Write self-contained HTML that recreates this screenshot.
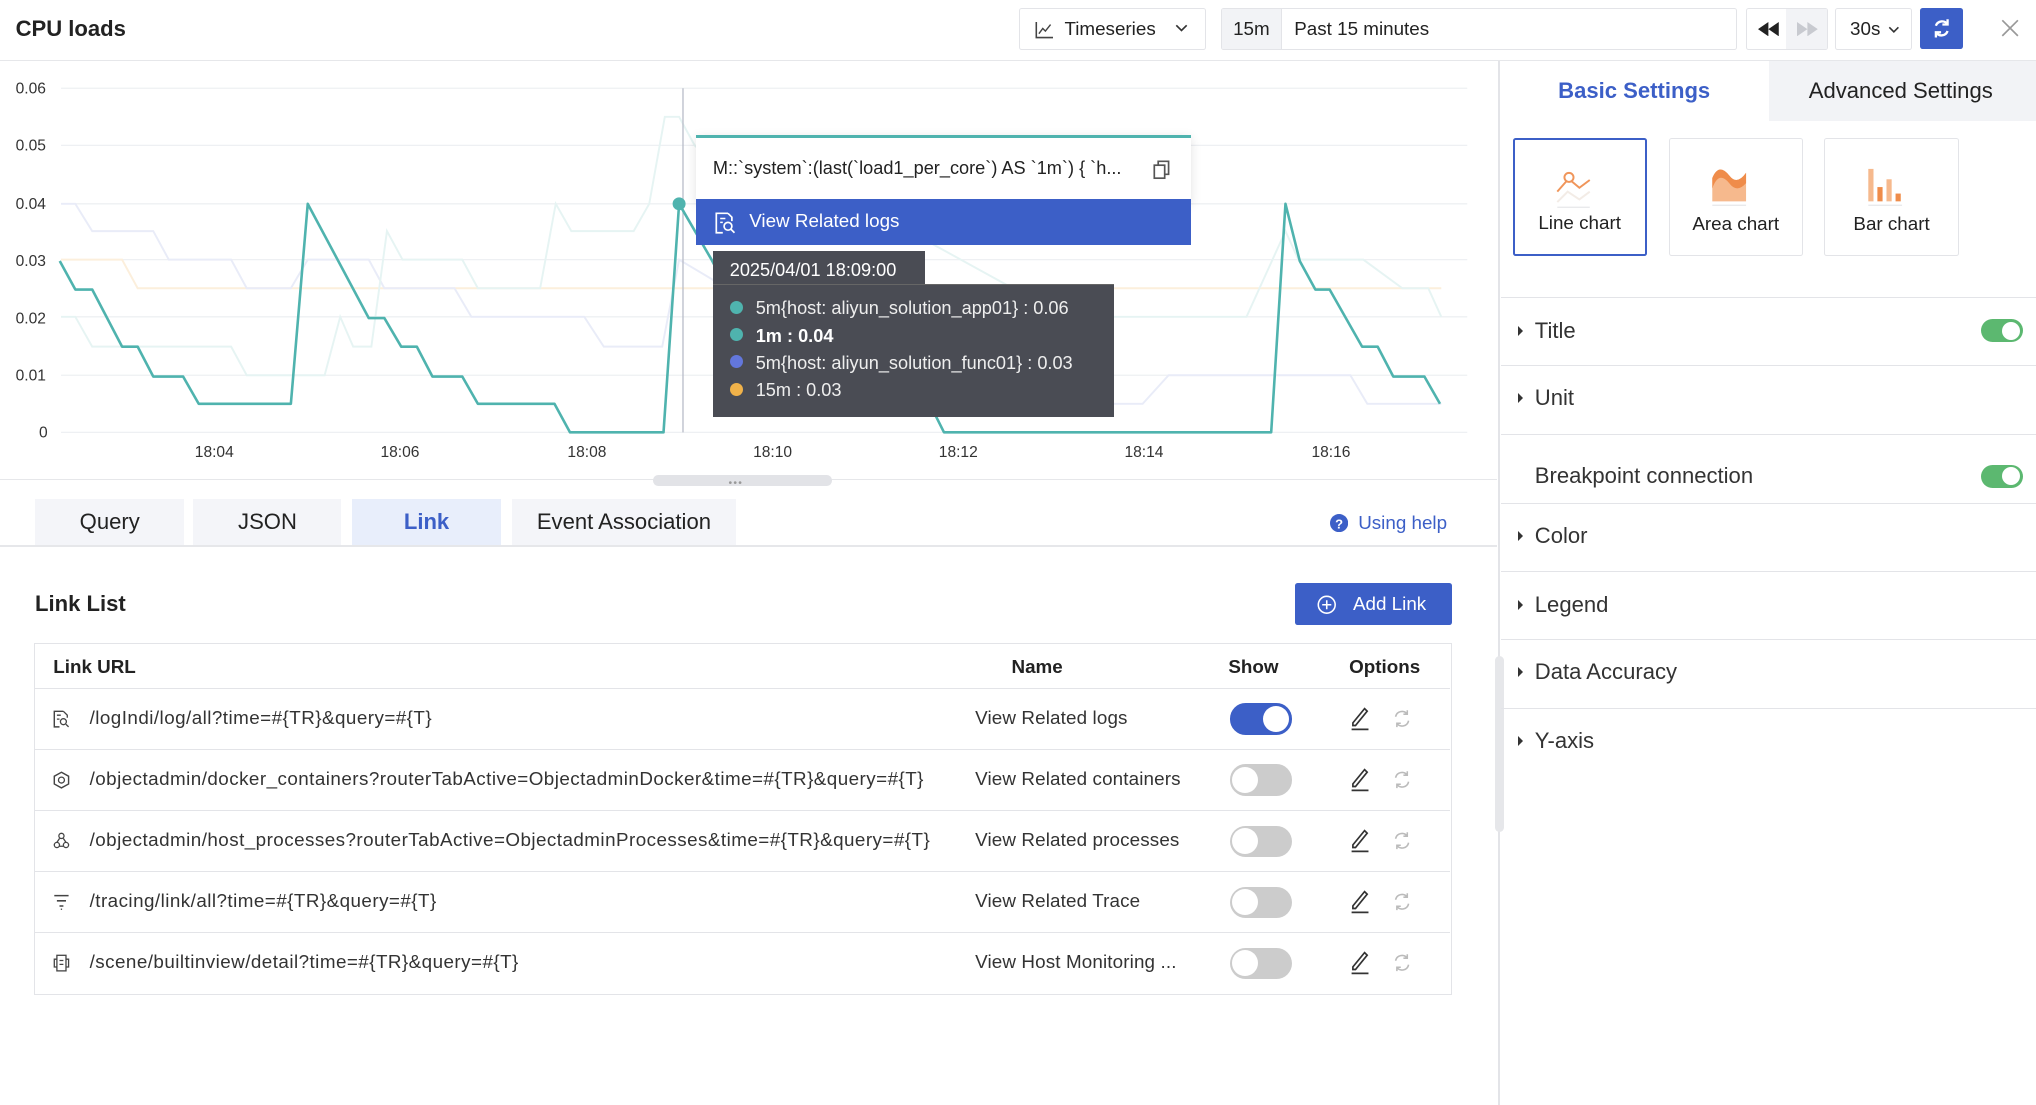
<!DOCTYPE html>
<html><head><meta charset="utf-8">
<style>
html,body{margin:0;padding:0;background:#fff;overflow:hidden}
body{width:2036px;height:1104px}
#w{position:absolute;left:0;top:0;width:1568px;height:851px;zoom:1.29847;font-family:"Liberation Sans",sans-serif;color:#222;font-size:14.5px}
.a{position:absolute}
.box{position:absolute;border:1px solid #e3e4e8;border-radius:2px;background:#fff}
.tab{position:absolute;top:384px;height:36px;line-height:36px;text-align:center;background:#f4f5f9;font-size:17px;color:#222}
.row{position:absolute;left:27px;width:1090px;height:46px;border-top:1px solid #e3e4e8}
.row .ic{position:absolute;left:14px;top:16px}
.row .u{position:absolute;left:42px;top:14px;font-size:14.5px;color:#333;letter-spacing:0.35px}
.row .n{position:absolute;left:724px;top:14px;font-size:14.5px;color:#333;letter-spacing:0.1px}
.sw{position:absolute;left:920px;top:11px;width:48px;height:24px;border-radius:12px;background:#ccc}
.sw::after{content:"";position:absolute;left:2px;top:2px;width:20px;height:20px;border-radius:50%;background:#fff}
.sw.on{background:#3c5fc7}.sw.on::after{left:26px}
.sec{position:absolute;left:1156px;width:412px;border-top:1px solid #e3e4e8;height:52px}
.sec .t{position:absolute;left:26px;top:15px;font-size:17px;color:#333}
.sec .ar{position:absolute;left:13px;top:21px;width:0;height:0;border-left:4px solid #333;border-top:4px solid transparent;border-bottom:4px solid transparent}
.tg{position:absolute;right:10px;top:16px;width:32px;height:18px;border-radius:9px;background:#5cb870}
.tg::after{content:"";position:absolute;right:2px;top:2px;width:14px;height:14px;border-radius:50%;background:#fff}
.ct{position:absolute;top:106px;width:102px;height:90px;border:1px solid #e3e4e8;border-radius:2px;text-align:center;font-size:14.5px}
.ct span{position:absolute;left:0;right:0;top:57px}
</style></head><body><div id="w">

<div class="a" style="left:12px;top:12px;font-size:17px;font-weight:bold;color:#222">CPU loads</div>
<div class="box" style="left:785px;top:6px;width:142px;height:31px">
 <svg class="a" style="left:11px;top:10px" width="14" height="13" viewBox="0 0 14 13"><path d="M1 0V12H14" fill="none" stroke="#444" stroke-width="1.2"/><path d="M3 9L6 5L8 7L12 2" fill="none" stroke="#444" stroke-width="1.1"/></svg>
 <span class="a" style="left:34px;top:7px;font-size:14.5px">Timeseries</span>
 <svg class="a" style="left:119px;top:12px" width="10" height="7"><path d="M1 1L5 5L9 1" fill="none" stroke="#333" stroke-width="1.3"/></svg>
</div>
<div class="box" style="left:940px;top:6px;width:396px;height:31px;overflow:hidden">
 <div class="a" style="left:0;top:0;width:46px;height:31px;background:#f2f3f6;border-right:1px solid #e3e4e8;line-height:31px;text-align:center">15m</div>
 <span class="a" style="left:56px;top:7px">Past 15 minutes</span>
</div>
<div class="box" style="left:1345px;top:6px;width:61px;height:31px;overflow:hidden">
 <div class="a" style="left:30px;top:0;width:31px;height:31px;background:#f2f3f6"></div>
 <svg class="a" style="left:8px;top:10px" width="16" height="11"><path d="M8 0L0 5.5L8 11ZM16 0L8 5.5L16 11Z" fill="#222"/></svg>
 <svg class="a" style="left:38px;top:10px" width="16" height="11"><path d="M0 0L8 5.5L0 11ZM8 0L16 5.5L8 11Z" fill="#c8cad0"/></svg>
</div>
<div class="box" style="left:1413px;top:6px;width:58px;height:31px">
 <span class="a" style="left:11px;top:7px">30s</span>
 <svg class="a" style="left:40px;top:13px" width="9" height="6"><path d="M1 1L4.5 4.5L8 1" fill="none" stroke="#333" stroke-width="1.2"/></svg>
</div>
<div class="a" style="left:1479px;top:6px;width:33px;height:32px;background:#3c5fc7;border-radius:2px">
 <svg class="a" style="left:9px;top:8px" width="15" height="16" viewBox="0 0 15 16"><path d="M12 5A5 5 0 0 0 3 6M3 11A5 5 0 0 0 12 10" fill="none" stroke="#fff" stroke-width="1.8"/><path d="M12 1V5H8M3 15V11H7" fill="none" stroke="#fff" stroke-width="1.8"/></svg>
</div>
<svg class="a" style="left:1541px;top:15px" width="14" height="14"><path d="M1 1L13 13M13 1L1 13" stroke="#999" stroke-width="1.3"/></svg>
<div class="a" style="left:0;top:46px;width:1568px;height:1px;background:#e6e7ea"></div>

<svg class="a" style="left:0;top:47px" width="1150" height="330" viewBox="0 47 1150 330">
 <g stroke="#eef0f3" stroke-width="1">
  <line x1="47" y1="68" x2="1130" y2="68"/><line x1="47" y1="112" x2="1130" y2="112"/><line x1="47" y1="157" x2="1130" y2="157"/>
  <line x1="47" y1="200" x2="1130" y2="200"/><line x1="47" y1="244" x2="1130" y2="244"/><line x1="47" y1="289" x2="1130" y2="289"/>
  <line x1="47" y1="333" x2="1130" y2="333"/>
 </g>
 <g font-family="Liberation Sans" font-size="12" fill="#333">
  <text x="12" y="72">0.06</text><text x="12" y="116">0.05</text><text x="12" y="161">0.04</text><text x="12" y="205">0.03</text>
  <text x="12" y="249">0.02</text><text x="12" y="293">0.01</text><text x="30" y="337">0</text>
  <text x="150" y="352">18:04</text><text x="293" y="352">18:06</text><text x="437" y="352">18:08</text><text x="580" y="352">18:10</text>
  <text x="723" y="352">18:12</text><text x="866" y="352">18:14</text><text x="1010" y="352">18:16</text>
 </g>
 <polyline fill="none" stroke="#fcefdc" stroke-width="1.5" points="47,200 94,200 106,222 1110,222"/>
 <polyline fill="none" stroke="#e9ecf8" stroke-width="1.5" points="47,157 58,157 71,178 118,178 130,200 178,200 190,222 224,222 237,200 284,200 296,222 350,222 363,244 450,244 465,267 510,267 523,200 560,222 600,244 650,244 700,267 740,267 760,289 800,289 830,289 845,311 880,311 900,289 950,289 1040,289 1053,311 1110,311"/>
 <polyline fill="none" stroke="#e6f4f3" stroke-width="1.5" points="47,244 58,244 71,267 178,267 190,289 250,289 262,244 272,267 286,267 298,178 310,200 356,200 368,222 416,222 428,157 440,178 488,178 500,157 512,90 523,90 535,112 560,135 600,157 700,178 780,222 830,222 850,244 900,244 960,244 990,178 1000,200 1050,200 1080,222 1100,222 1110,244"/>
 <line x1="526" y1="68" x2="526" y2="333" stroke="#b8bcc8" stroke-width="1"/>
 <polyline fill="none" stroke="#4fb3ae" stroke-width="2" stroke-linejoin="round" points="46,201 58,223 71,223 94,267 106,267 118,290 141,290 153,311 224,311 237,157 284,245 296,245 309,267 321,267 333,290 356,290 368,311 427,311 439,333 511,333 523,157 548,200 560,223 575,223 595,267 607,267 618,290 640,290 654,311 716,311 727,333 979,333 990,157 1001,201 1013,223 1024,223 1049,267 1061,267 1073,290 1097,290 1109,311"/>
 <circle cx="523" cy="157" r="5" fill="#4fb3ae"/>
</svg>
<div class="a" style="left:0;top:369px;width:1153px;height:1px;background:#e6e7ea"></div>
<div class="a" style="left:503px;top:366px;width:138px;height:8px;background:#e2e3e7;border-radius:4px"></div>
<div class="a" style="left:561px;top:368px;font-size:8px;color:#999;letter-spacing:1px">•••</div>

<div class="a" style="left:536px;top:104px;width:381px;height:50px;background:#fff;border-top:3px solid #4fb3ae;box-shadow:0 2px 8px rgba(0,0,0,.12)">
 <span class="a" style="left:13px;top:15px;font-size:14px;white-space:nowrap">M::`system`:(last(`load1_per_core`) AS `1m`) { `h...</span>
 <svg class="a" style="left:352px;top:17px" width="13" height="15"><rect x="1" y="4" width="8" height="10" fill="none" stroke="#555" stroke-width="1.3"/><path d="M4 4V1H12V11H9" fill="none" stroke="#555" stroke-width="1.3"/></svg>
</div>
<div class="a" style="left:536px;top:153px;width:381px;height:36px;background:#3c5fc7">
 <svg class="a" style="left:15px;top:10px" width="16" height="17"><path d="M10 1H1V16H6" fill="none" stroke="#fff" stroke-width="1.3"/><path d="M10 1L13 4V7" fill="none" stroke="#fff" stroke-width="1.3"/><circle cx="10" cy="11" r="3" fill="none" stroke="#fff" stroke-width="1.3"/><path d="M12 13L15 16" stroke="#fff" stroke-width="1.3"/><path d="M4 5H8M4 8H6" stroke="#fff" stroke-width="1.2"/></svg>
 <span class="a" style="left:41px;top:9px;color:#fff;font-size:14.5px">View Related logs</span>
</div>
<div class="a" style="left:549px;top:193px;width:163px;height:26px;background:#4a4c54;color:#fff;font-size:14px;line-height:30px;text-indent:13px">2025/04/01 18:09:00</div>
<div class="a" style="left:549px;top:219px;width:309px;height:101px;background:#4a4c54;border-top:1px solid #666;color:#eee;font-size:14px">
 <div class="a" style="left:13px;top:12px;width:10px;height:10px;border-radius:50%;background:#4fb3ae"></div><span class="a" style="left:33px;top:10px">5m{host: aliyun_solution_app01} : 0.06</span>
 <div class="a" style="left:13px;top:33px;width:10px;height:10px;border-radius:50%;background:#4fb3ae"></div><span class="a" style="left:33px;top:31px;font-weight:bold;color:#fff">1m : 0.04</span>
 <div class="a" style="left:13px;top:54px;width:10px;height:10px;border-radius:50%;background:#6377dc"></div><span class="a" style="left:33px;top:52px">5m{host: aliyun_solution_func01} : 0.03</span>
 <div class="a" style="left:13px;top:75px;width:10px;height:10px;border-radius:50%;background:#f0b24a"></div><span class="a" style="left:33px;top:73px">15m : 0.03</span>
</div>

<div class="tab" style="left:27px;width:115px">Query</div>
<div class="tab" style="left:149px;width:114px">JSON</div>
<div class="tab" style="left:271px;width:115px;background:#e8eefb;color:#3c5fc7;font-weight:bold">Link</div>
<div class="tab" style="left:394px;width:173px">Event Association</div>
<div class="a" style="left:0;top:420px;width:1153px;height:1px;background:#e6e7ea"></div>
<svg class="a" style="left:1024px;top:396px" width="14" height="14"><circle cx="7" cy="7" r="7" fill="#3c5fc7"/><text x="7" y="11" font-size="10" font-weight="bold" fill="#fff" text-anchor="middle" font-family="Liberation Sans">?</text></svg>
<span class="a" style="left:1046px;top:394px;color:#3c5fc7;font-size:14.5px">Using help</span>

<div class="a" style="left:27px;top:455px;font-size:17px;font-weight:bold">Link List</div>
<div class="a" style="left:997px;top:449px;width:121px;height:32px;background:#3c5fc7;border-radius:2px">
 <svg class="a" style="left:17px;top:9px" width="15" height="15"><circle cx="7.5" cy="7.5" r="6.5" fill="none" stroke="#fff" stroke-width="1.2"/><path d="M7.5 4V11M4 7.5H11" stroke="#fff" stroke-width="1.2"/></svg>
 <span class="a" style="left:45px;top:8px;color:#fff;font-size:14.5px">Add Link</span>
</div>

<div class="a" style="left:26px;top:495px;width:1091px;height:270px;border:1px solid #e3e4e8"></div>
<div class="a" style="left:41px;top:505px;font-weight:bold;font-size:14.5px">Link URL</div>
<div class="a" style="left:779px;top:505px;font-weight:bold;font-size:14.5px">Name</div>
<div class="a" style="left:946px;top:505px;font-weight:bold;font-size:14.5px">Show</div>
<div class="a" style="left:1039px;top:505px;font-weight:bold;font-size:14.5px">Options</div>

<div class="row" style="top:530px">
 <svg class="ic" width="13" height="14"><path d="M8 1H1V13H5" fill="none" stroke="#444" stroke-width="1.1"/><path d="M8 1L11 4V6" fill="none" stroke="#444"/><circle cx="8" cy="9" r="2.3" fill="none" stroke="#444"/><path d="M10 11L12 13M3 4H6M3 7H5" stroke="#444"/></svg>
 <span class="u">/logIndi/log/all?time=#{TR}&amp;query=#{T}</span><span class="n">View Related logs</span><div class="sw on"></div>
</div>
<div class="row" style="top:577px">
 <svg class="ic" width="13" height="14"><path d="M6.5 1L12 4V10L6.5 13L1 10V4Z" fill="none" stroke="#444" stroke-width="1.1"/><circle cx="6.5" cy="7" r="2.3" fill="none" stroke="#444"/></svg>
 <span class="u">/objectadmin/docker_containers?routerTabActive=ObjectadminDocker&amp;time=#{TR}&amp;query=#{T}</span><span class="n">View Related containers</span><div class="sw"></div>
</div>
<div class="row" style="top:624px">
 <svg class="ic" width="13" height="14"><circle cx="6.5" cy="3" r="2" fill="none" stroke="#444"/><circle cx="3" cy="10" r="2" fill="none" stroke="#444"/><circle cx="10" cy="10" r="2" fill="none" stroke="#444"/><path d="M5 5L3 8M8 5L10 8M5 11H8" stroke="#444"/></svg>
 <span class="u">/objectadmin/host_processes?routerTabActive=ObjectadminProcesses&amp;time=#{TR}&amp;query=#{T}</span><span class="n">View Related processes</span><div class="sw"></div>
</div>
<div class="row" style="top:671px">
 <svg class="ic" width="13" height="14"><path d="M1 2H12M3 6H10M5 10H8" stroke="#444" stroke-width="1.2"/><path d="M6.5 12V13" stroke="#444"/></svg>
 <span class="u">/tracing/link/all?time=#{TR}&amp;query=#{T}</span><span class="n">View Related Trace</span><div class="sw"></div>
</div>
<div class="row" style="top:718px">
 <svg class="ic" width="13" height="14"><rect x="3" y="1" width="7" height="12" fill="none" stroke="#444"/><path d="M3 4H1V10H3M10 4H12V10H10M5 5H8M5 8H8" stroke="#444" fill="none"/></svg>
 <span class="u">/scene/builtinview/detail?time=#{TR}&amp;query=#{T}</span><span class="n">View Host Monitoring ...</span><div class="sw"></div>
</div>
<div class="a" style="left:0;top:0">
 <svg class="a" style="left:1039px;top:544px" width="18" height="19"><path d="M3 13L12 2L14 4L5 15H3Z" fill="none" stroke="#333" stroke-width="1.3"/><path d="M2 18H15" stroke="#333" stroke-width="1.4"/></svg>
 <svg class="a" style="left:1039px;top:591px" width="18" height="19"><path d="M3 13L12 2L14 4L5 15H3Z" fill="none" stroke="#333" stroke-width="1.3"/><path d="M2 18H15" stroke="#333" stroke-width="1.4"/></svg>
 <svg class="a" style="left:1039px;top:638px" width="18" height="19"><path d="M3 13L12 2L14 4L5 15H3Z" fill="none" stroke="#333" stroke-width="1.3"/><path d="M2 18H15" stroke="#333" stroke-width="1.4"/></svg>
 <svg class="a" style="left:1039px;top:685px" width="18" height="19"><path d="M3 13L12 2L14 4L5 15H3Z" fill="none" stroke="#333" stroke-width="1.3"/><path d="M2 18H15" stroke="#333" stroke-width="1.4"/></svg>
 <svg class="a" style="left:1039px;top:732px" width="18" height="19"><path d="M3 13L12 2L14 4L5 15H3Z" fill="none" stroke="#333" stroke-width="1.3"/><path d="M2 18H15" stroke="#333" stroke-width="1.4"/></svg>
 <svg class="a" style="left:1073px;top:546px" width="14" height="15"><path d="M11 4A5 5 0 0 0 2 6M3 11A5 5 0 0 0 12 9M11 1V4H8M3 14V11H6" fill="none" stroke="#bbb" stroke-width="1.2"/></svg>
 <svg class="a" style="left:1073px;top:593px" width="14" height="15"><path d="M11 4A5 5 0 0 0 2 6M3 11A5 5 0 0 0 12 9M11 1V4H8M3 14V11H6" fill="none" stroke="#bbb" stroke-width="1.2"/></svg>
 <svg class="a" style="left:1073px;top:640px" width="14" height="15"><path d="M11 4A5 5 0 0 0 2 6M3 11A5 5 0 0 0 12 9M11 1V4H8M3 14V11H6" fill="none" stroke="#bbb" stroke-width="1.2"/></svg>
 <svg class="a" style="left:1073px;top:687px" width="14" height="15"><path d="M11 4A5 5 0 0 0 2 6M3 11A5 5 0 0 0 12 9M11 1V4H8M3 14V11H6" fill="none" stroke="#bbb" stroke-width="1.2"/></svg>
 <svg class="a" style="left:1073px;top:734px" width="14" height="15"><path d="M11 4A5 5 0 0 0 2 6M3 11A5 5 0 0 0 12 9M11 1V4H8M3 14V11H6" fill="none" stroke="#bbb" stroke-width="1.2"/></svg>
</div>

<div class="a" style="left:1154px;top:47px;width:1px;height:804px;background:#e3e4e8"></div>
<div class="a" style="left:1151px;top:505px;width:7px;height:136px;background:#e6e7ea;border-radius:4px"></div>
<div class="a" style="left:1362px;top:47px;width:206px;height:46px;background:#f2f3f6"></div>
<div class="a" style="left:1200px;top:60px;font-size:17px;font-weight:bold;color:#3c5fc7">Basic Settings</div>
<div class="a" style="left:1393px;top:60px;font-size:17px;color:#222">Advanced Settings</div>

<div class="ct" style="left:1165px;border:2px solid #3c5fc7;width:100px;height:88px">
 <svg class="a" style="left:32px;top:21px" width="38" height="32"><circle cx="10" cy="8" r="3.5" fill="none" stroke="#f0955a" stroke-width="1.5"/><path d="M1 19L8 11M12 11L18 16L26 10" fill="none" stroke="#f0955a" stroke-width="1.5"/><path d="M1 27L9 19L18 25L26 19" fill="none" stroke="#f3ece6" stroke-width="1.5"/><path d="M1 31H26" stroke="#e6e7ea"/></svg>
 <span style="top:56px">Line chart</span>
</div>
<div class="ct" style="left:1285px">
 <svg class="a" style="left:32px;top:20px" width="40" height="32"><path d="M1 10Q6 -2 14 8Q20 16 27 6V28H1Z" fill="#f6b98d"/><path d="M1 10Q6 -2 14 8Q20 16 27 6V14Q20 22 14 14Q6 4 1 18Z" fill="#ef8c4a"/><path d="M1 31H27" stroke="#e6e7ea"/></svg>
 <span>Area chart</span>
</div>
<div class="ct" style="left:1405px">
 <svg class="a" style="left:32px;top:20px" width="40" height="32"><rect x="1" y="3" width="4" height="25" fill="#f6b98d"/><rect x="8" y="17" width="4" height="11" fill="#ef8c4a"/><rect x="15" y="11" width="4" height="17" fill="#f6b98d"/><rect x="22" y="22" width="4" height="6" fill="#ef8c4a"/><path d="M1 31H27" stroke="#e6e7ea"/></svg>
 <span>Bar chart</span>
</div>

<div class="sec" style="top:229px"><div class="ar"></div><span class="t">Title</span><div class="tg"></div></div>
<div class="sec" style="top:281px"><div class="ar"></div><span class="t">Unit</span></div>
<div class="sec" style="top:334px"><span class="t" style="top:22px">Breakpoint connection</span><div class="tg" style="top:23px"></div></div>
<div class="sec" style="top:387px"><div class="ar"></div><span class="t">Color</span></div>
<div class="sec" style="top:440px"><div class="ar"></div><span class="t">Legend</span></div>
<div class="sec" style="top:492px"><div class="ar"></div><span class="t">Data Accuracy</span></div>
<div class="sec" style="top:545px"><div class="ar"></div><span class="t">Y-axis</span></div>

</div></body></html>
